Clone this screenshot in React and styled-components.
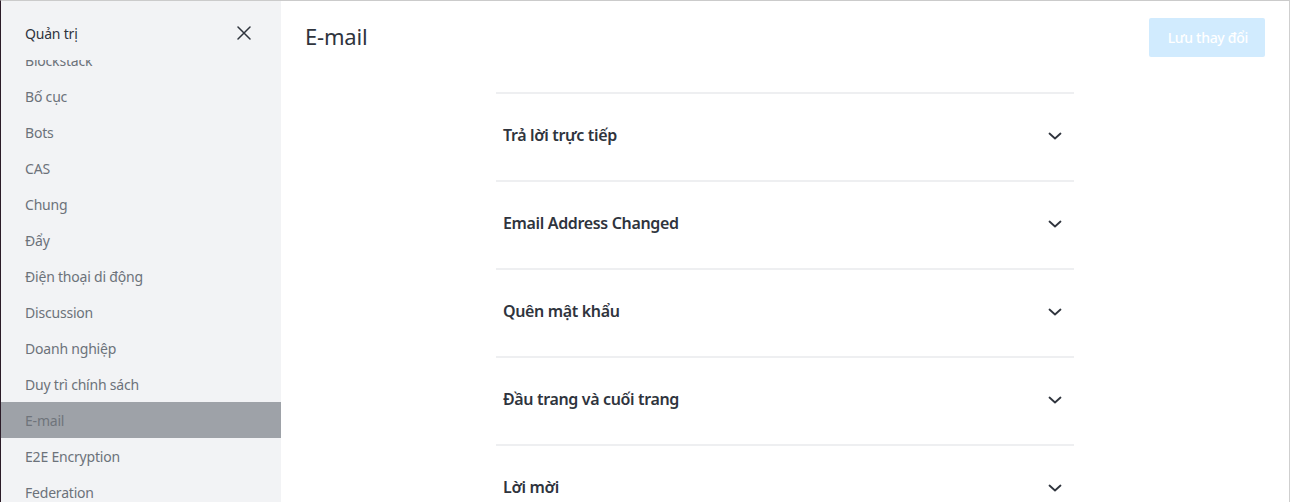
import React from "react";
import styled, { createGlobalStyle } from "styled-components";

const GlobalStyle = createGlobalStyle`
  html, body {
    margin: 0;
    padding: 0;
    height: 100%;
    overflow: hidden;
  }
  body {
    font-family: "Noto Sans", "Open Sans", sans-serif;
    color: #2f343d;
    background: #ffffff;
  }
`;

const menuItems = [
  "Blockstack",
  "Bố cục",
  "Bots",
  "CAS",
  "Chung",
  "Đẩy",
  "Điện thoại di động",
  "Discussion",
  "Doanh nghiệp",
  "Duy trì chính sách",
  "E-mail",
  "E2E Encryption",
  "Federation",
  "File Upload",
];

const sections = [
  "Trả lời trực tiếp",
  "Email Address Changed",
  "Quên mật khẩu",
  "Đầu trang và cuối trang",
  "Lời mời",
];

function App() {
  return (
    <>
      <GlobalStyle />
      <Frame>
        <Sidebar>
          <SidebarHeader>
            <SidebarTitle>Quản trị</SidebarTitle>
            <CloseButton>
              <svg width="14" height="14" viewBox="0 0 14 14" fill="none">
                <path d="M1 1L13 13M13 1L1 13" stroke="#2f343d" strokeWidth="1.5" strokeLinecap="round" />
              </svg>
            </CloseButton>
          </SidebarHeader>
          <MenuScroll>
            <MenuList>
              {menuItems.map((item) => (
                <MenuItem key={item} active={item === "E-mail"}>
                  {item}
                </MenuItem>
              ))}
            </MenuList>
          </MenuScroll>
        </Sidebar>
        <Main>
          <PageHeader>
            <PageTitle>E-mail</PageTitle>
            <SaveButton disabled>Lưu thay đổi</SaveButton>
          </PageHeader>
          <Content>
            <Accordion>
              {sections.map((title) => (
                <Section key={title}>
                  <SectionTitle>{title}</SectionTitle>
                  <Chevron>
                    <svg width="14" height="8" viewBox="0 0 14 8" fill="none">
                      <path d="M1.5 1.5L7 6.5L12.5 1.5" stroke="#2f343d" strokeWidth="1.8" strokeLinecap="round" strokeLinejoin="round" />
                    </svg>
                  </Chevron>
                </Section>
              ))}
            </Accordion>
          </Content>
        </Main>
      </Frame>
    </>
  );
}

export default App;

const Frame = styled.div`
  display: flex;
  height: 502px;
  box-sizing: border-box;
  border-top: 1px solid #cbcbcb;
  border-left: 1px solid #2b1b27;
  border-right: 1px solid #cfcfcf;
  margin-right: 1px;
`;

const Sidebar = styled.div`
  width: 280px;
  flex-shrink: 0;
  background: #f2f3f5;
  display: flex;
  flex-direction: column;
  min-height: 0;
`;

const SidebarHeader = styled.div`
  height: 59px;
  flex-shrink: 0;
  box-sizing: border-box;
  display: flex;
  align-items: center;
  justify-content: space-between;
  padding: 5px 30px 0 24px;
`;

const SidebarTitle = styled.div`
  font-size: 14px;
  color: #2f343d;
  letter-spacing: -0.2px;
`;

const CloseButton = styled.div`
  display: flex;
  align-items: center;
  cursor: pointer;
`;

const MenuScroll = styled.div`
  flex: 1;
  min-height: 0;
  overflow: hidden;
`;

const MenuList = styled.div`
  margin-top: -18px;
`;

const MenuItem = styled.div`
  height: 36px;
  display: flex;
  align-items: center;
  padding-left: 24px;
  font-size: 14px;
  letter-spacing: -0.2px;
  color: ${(p) => (p.active ? "#6f747b" : "#6c727a")};
  background: ${(p) => (p.active ? "#9ea2a8" : "transparent")};
`;

const Main = styled.div`
  flex: 1;
  display: flex;
  flex-direction: column;
  background: #ffffff;
`;

const PageHeader = styled.div`
  display: flex;
  align-items: center;
  justify-content: space-between;
  padding: 17px 24px 0 24px;
  height: 40px;
`;

const PageTitle = styled.h1`
  margin: -4px 0 0 0;
  font-size: 22px;
  font-weight: 400;
  letter-spacing: -0.2px;
  color: #2f343d;
`;

const SaveButton = styled.button`
  height: 39px;
  padding: 0 17px 0 19px;
  border: none;
  border-radius: 2px;
  background: #d1ebfe;
  color: #ffffff;
  font-family: inherit;
  font-size: 14px;
  font-weight: 500;
  letter-spacing: -0.3px;
`;

const Content = styled.div`
  display: flex;
  justify-content: center;
  padding-top: 35px;
`;

const Accordion = styled.div`
  width: 578px;
`;

const Section = styled.div`
  height: 88px;
  box-sizing: border-box;
  border-top: 2px solid #eeeff1;
  display: flex;
  align-items: center;
  justify-content: space-between;
  padding: 0 12px 4px 7px;
`;

const SectionTitle = styled.div`
  font-size: 16px;
  font-weight: 600;
  letter-spacing: -0.35px;
  color: #2f343d;
`;

const Chevron = styled.div`
  display: flex;
  align-items: center;
  margin-top: 2px;
`;
